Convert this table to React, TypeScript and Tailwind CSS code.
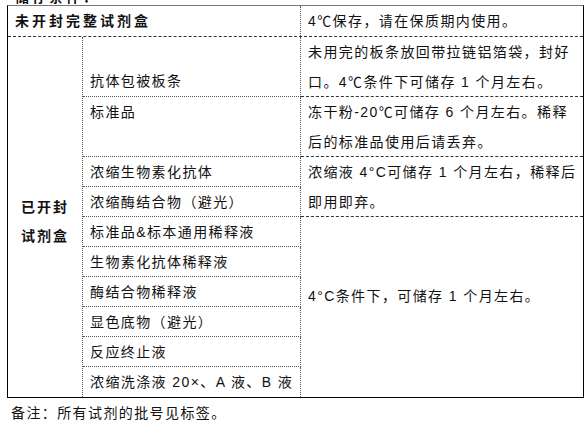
const font = { fontFamily: '"Liberation Sans", "Noto Sans CJK SC", sans-serif' };

const cell = "px-[7px] tracking-[1.4px] text-[14px] leading-[30px] text-[#111] whitespace-nowrap";
const hLine = "border-b border-dashed border-[#333]";
const vLine = "border-r border-dotted border-[#555]";

export default function App() {
  return (
    <div className="w-[588px] h-[427px] bg-white overflow-hidden" style={font}>
      {/* cut-off heading above the table */}
      <div className="h-[5px] overflow-hidden pl-[15px]">
        <div className="-mt-[10px] text-[14px] leading-[14px] font-bold tracking-[3px] text-[#111]">
          储存条件：
        </div>
      </div>

      <div className="ml-[7px] w-[577px] border border-black border-t-[#777]">
        {/* unopened kit */}
        <div className={`flex ${hLine}`}>
          <div className={`w-[293px] ${vLine} ${cell} font-bold tracking-[3px]`}>未开封完整试剂盒</div>
          <div className={`flex-1 ${cell}`}>4℃保存，请在保质期内使用。</div>
        </div>

        {/* opened kit */}
        <div className="flex">
          <div className={`w-[75px] shrink-0 ${vLine} flex flex-col items-center justify-center pt-[10px] text-[14px] leading-[29px] font-bold tracking-[2px] text-[#111]`}>
            <span>已开封</span>
            <span>试剂盒</span>
          </div>

          <div className="flex-1 grid grid-cols-[218px_1fr] grid-rows-[repeat(12,30px)]">
            <div className={`row-span-2 ${vLine} ${hLine} ${cell} flex items-end`}>抗体包被板条</div>
            <div className={`row-span-2 ${hLine} ${cell}`}>
              未用完的板条放回带拉链铝箔袋，封好
              <br />
              口。4℃条件下可储存 1 个月左右。
            </div>

            <div className={`row-span-2 ${vLine} ${hLine} ${cell}`}>标准品</div>
            <div className={`row-span-2 ${hLine} ${cell}`}>
              冻干粉-20℃可储存 6 个月左右。稀释
              <br />
              后的标准品使用后请丢弃。
            </div>

            <div className={`${vLine} ${hLine} ${cell}`}>浓缩生物素化抗体</div>
            <div className={`row-span-2 row-start-5 col-start-2 ${hLine} ${cell}`}>
              浓缩液 4°C可储存 1 个月左右，稀释后
              <br />
              即用即弃。
            </div>
            <div className={`${vLine} ${hLine} ${cell}`}>浓缩酶结合物（避光）</div>

            <div className={`${vLine} ${hLine} ${cell}`}>标准品&amp;标本通用稀释液</div>
            <div className={`row-span-6 row-start-7 col-start-2 ${cell} pt-[64px]`}>
              4°C条件下，可储存 1 个月左右。
            </div>
            <div className={`${vLine} ${hLine} ${cell}`}>生物素化抗体稀释液</div>
            <div className={`${vLine} ${hLine} ${cell}`}>酶结合物稀释液</div>
            <div className={`${vLine} ${hLine} ${cell}`}>显色底物（避光）</div>
            <div className={`${vLine} ${hLine} ${cell}`}>反应终止液</div>
            <div className={`${vLine} ${cell} tracking-[0.6px]`}>浓缩洗涤液 20×、A 液、B 液</div>
          </div>
        </div>
      </div>

      <div className={`pl-[11px] ${cell}`}>备注：所有试剂的批号见标签。</div>
    </div>
  );
}
